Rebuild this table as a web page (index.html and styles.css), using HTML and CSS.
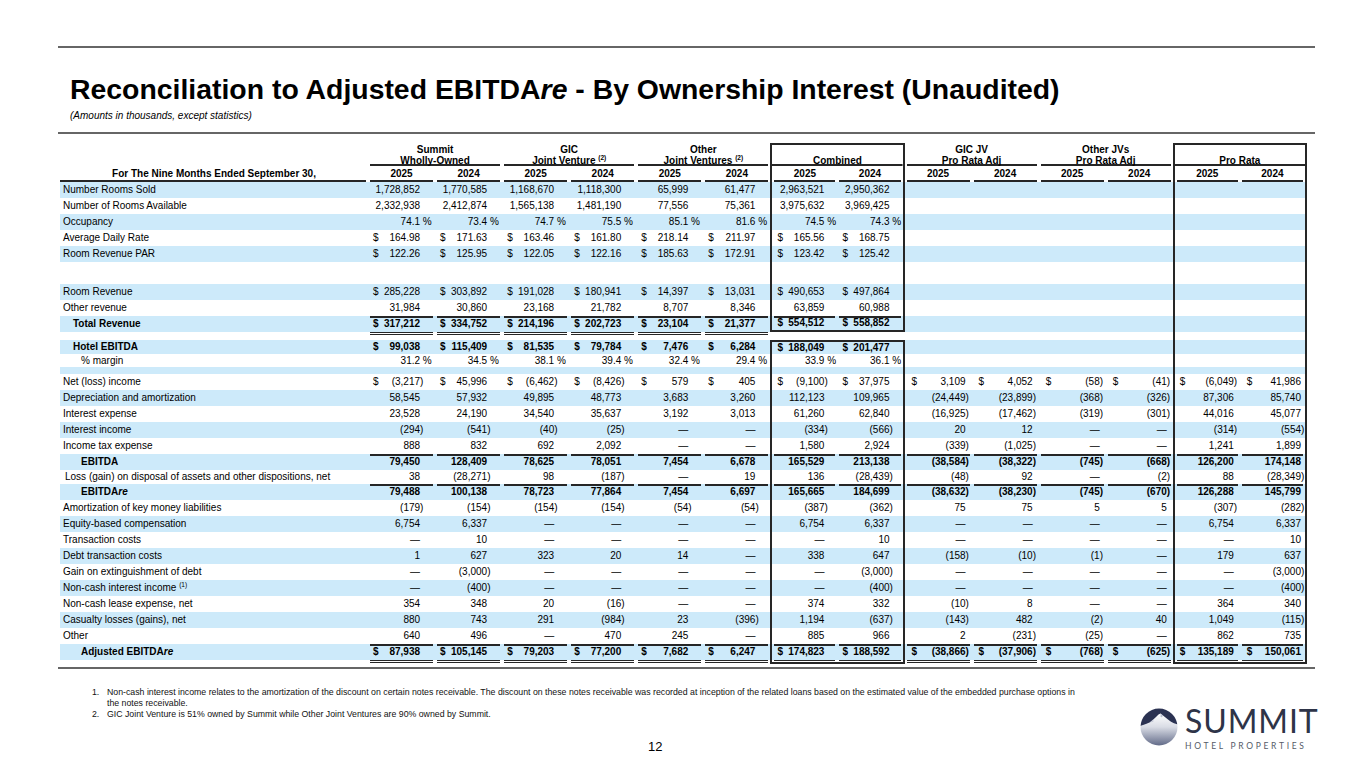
FILE: index.html
```html
<!DOCTYPE html>
<html lang="en">
<head>
<meta charset="utf-8">
<title>Reconciliation to Adjusted EBITDAre - By Ownership Interest</title>
<link rel="stylesheet" href="styles.css">
</head>
<body>
<div class="page">
  <div class="rule rule-top"></div>
  <h1 class="title">Reconciliation to Adjusted EBITDA<em>re</em> - By Ownership Interest (Unaudited)</h1>
  <p class="subtitle">(Amounts in thousands, except statistics)</p>
  <div class="rule"></div>

  <table class="fin">
    <colgroup><col class="c-lab"><col span="14"></colgroup>
    <thead>
      <tr class="grp">
        <th></th>
        <th colspan="2">Summit<br>Wholly-Owned</th>
        <th colspan="2">GIC<br>Joint Venture <sup>(2)</sup></th>
        <th colspan="2">Other<br>Joint Ventures <sup>(2)</sup></th>
        <th colspan="2" class="bx">Combined</th>
        <th colspan="2">GIC JV<br>Pro Rata Adj</th>
        <th colspan="2">Other JVs<br>Pro Rata Adj</th>
        <th colspan="2" class="bx">Pro Rata</th>
      </tr>
      <tr class="yr">
        <th>For The Nine Months Ended September 30,</th>
        <th>2025</th><th>2024</th><th>2025</th><th>2024</th><th>2025</th><th>2024</th><th>2025</th><th>2024</th>
        <th>2025</th><th>2024</th><th>2025</th><th>2024</th><th>2025</th><th>2024</th>
      </tr>
    </thead>
    <tbody>
      <tr class="s"><td>Number Rooms Sold</td><td>1,728,852</td><td>1,770,585</td><td>1,168,670</td><td>1,118,300</td><td>65,999</td><td>61,477</td><td>2,963,521</td><td>2,950,362</td><td></td><td></td><td></td><td></td><td></td><td></td></tr>
      <tr><td>Number of Rooms Available</td><td>2,332,938</td><td>2,412,874</td><td>1,565,138</td><td>1,481,190</td><td>77,556</td><td>75,361</td><td>3,975,632</td><td>3,969,425</td><td></td><td></td><td></td><td></td><td></td><td></td></tr>
      <tr class="s"><td>Occupancy</td><td>74.1<span class="h"> %</span></td><td>73.4<span class="h"> %</span></td><td>74.7<span class="h"> %</span></td><td>75.5<span class="h"> %</span></td><td>85.1<span class="h"> %</span></td><td>81.6<span class="h"> %</span></td><td>74.5<span class="h"> %</span></td><td>74.3<span class="h"> %</span></td><td></td><td></td><td></td><td></td><td></td><td></td></tr>
      <tr><td>Average Daily Rate</td><td><span class="d">$</span>164.98</td><td><span class="d">$</span>171.63</td><td><span class="d">$</span>163.46</td><td><span class="d">$</span>161.80</td><td><span class="d">$</span>218.14</td><td><span class="d">$</span>211.97</td><td><span class="d">$</span>165.56</td><td><span class="d">$</span>168.75</td><td></td><td></td><td></td><td></td><td></td><td></td></tr>
      <tr class="s"><td>Room Revenue PAR</td><td><span class="d">$</span>122.26</td><td><span class="d">$</span>125.95</td><td><span class="d">$</span>122.05</td><td><span class="d">$</span>122.16</td><td><span class="d">$</span>185.63</td><td><span class="d">$</span>172.91</td><td><span class="d">$</span>123.42</td><td><span class="d">$</span>125.42</td><td></td><td></td><td></td><td></td><td></td><td></td></tr>
      <tr class="blank"><td></td><td></td><td></td><td></td><td></td><td></td><td></td><td></td><td></td><td></td><td></td><td></td><td></td><td></td><td></td></tr>
      <tr class="s"><td>Room Revenue</td><td><span class="d">$</span>285,228</td><td><span class="d">$</span>303,892</td><td><span class="d">$</span>191,028</td><td><span class="d">$</span>180,941</td><td><span class="d">$</span>14,397</td><td><span class="d">$</span>13,031</td><td><span class="d">$</span>490,653</td><td><span class="d">$</span>497,864</td><td></td><td></td><td></td><td></td><td></td><td></td></tr>
      <tr><td>Other revenue</td><td>31,984</td><td>30,860</td><td>23,168</td><td>21,782</td><td>8,707</td><td>8,346</td><td>63,859</td><td>60,988</td><td></td><td></td><td></td><td></td><td></td><td></td></tr>
      <tr class="s b ut8 tot"><td class="i1">Total Revenue</td><td><span class="d">$</span>317,212</td><td><span class="d">$</span>334,752</td><td><span class="d">$</span>214,196</td><td><span class="d">$</span>202,723</td><td><span class="d">$</span>23,104</td><td><span class="d">$</span>21,377</td><td><span class="d">$</span>554,512</td><td><span class="d">$</span>558,852</td><td></td><td></td><td></td><td></td><td></td><td></td></tr>
      <tr class="gap db6"><td></td><td></td><td></td><td></td><td></td><td></td><td></td><td></td><td></td><td></td><td></td><td></td><td></td><td></td><td></td></tr>
      <tr class="s b h13 heb"><td class="i1">Hotel EBITDA</td><td><span class="d">$</span>99,038</td><td><span class="d">$</span>115,409</td><td><span class="d">$</span>81,535</td><td><span class="d">$</span>79,784</td><td><span class="d">$</span>7,476</td><td><span class="d">$</span>6,284</td><td><span class="d">$</span>188,049</td><td><span class="d">$</span>201,477</td><td></td><td></td><td></td><td></td><td></td><td></td></tr>
      <tr class="h13"><td class="i2">% margin</td><td>31.2<span class="h"> %</span></td><td>34.5<span class="h"> %</span></td><td>38.1<span class="h"> %</span></td><td>39.4<span class="h"> %</span></td><td>32.4<span class="h"> %</span></td><td>29.4<span class="h"> %</span></td><td>33.9<span class="h"> %</span></td><td>36.1<span class="h"> %</span></td><td></td><td></td><td></td><td></td><td></td><td></td></tr>
      <tr class="s thin"><td></td><td></td><td></td><td></td><td></td><td></td><td></td><td></td><td></td><td></td><td></td><td></td><td></td><td></td><td></td></tr>
      <tr><td>Net (loss) income</td><td><span class="d">$</span>(3,217<span class="h">)</span></td><td><span class="d">$</span>45,996</td><td><span class="d">$</span>(6,462<span class="h">)</span></td><td><span class="d">$</span>(8,426<span class="h">)</span></td><td><span class="d">$</span>579</td><td><span class="d">$</span>405</td><td><span class="d">$</span>(9,100<span class="h">)</span></td><td><span class="d">$</span>37,975</td><td><span class="d">$</span>3,109</td><td><span class="d">$</span>4,052</td><td><span class="d">$</span>(58<span class="h">)</span></td><td><span class="d">$</span>(41<span class="h">)</span></td><td><span class="d">$</span>(6,049<span class="h">)</span></td><td><span class="d">$</span>41,986</td></tr>
      <tr class="s"><td>Depreciation and amortization</td><td>58,545</td><td>57,932</td><td>49,895</td><td>48,773</td><td>3,683</td><td>3,260</td><td>112,123</td><td>109,965</td><td>(24,449<span class="h">)</span></td><td>(23,899<span class="h">)</span></td><td>(368<span class="h">)</span></td><td>(326<span class="h">)</span></td><td>87,306</td><td>85,740</td></tr>
      <tr><td>Interest expense</td><td>23,528</td><td>24,190</td><td>34,540</td><td>35,637</td><td>3,192</td><td>3,013</td><td>61,260</td><td>62,840</td><td>(16,925<span class="h">)</span></td><td>(17,462<span class="h">)</span></td><td>(319<span class="h">)</span></td><td>(301<span class="h">)</span></td><td>44,016</td><td>45,077</td></tr>
      <tr class="s"><td>Interest income</td><td>(294<span class="h">)</span></td><td>(541<span class="h">)</span></td><td>(40<span class="h">)</span></td><td>(25<span class="h">)</span></td><td>—</td><td>—</td><td>(334<span class="h">)</span></td><td>(566<span class="h">)</span></td><td>20</td><td>12</td><td>—</td><td>—</td><td>(314<span class="h">)</span></td><td>(554<span class="h">)</span></td></tr>
      <tr><td>Income tax expense</td><td>888</td><td>832</td><td>692</td><td>2,092</td><td>—</td><td>—</td><td>1,580</td><td>2,924</td><td>(339<span class="h">)</span></td><td>(1,025<span class="h">)</span></td><td>—</td><td>—</td><td>1,241</td><td>1,899</td></tr>
      <tr class="s b ut"><td class="i2">EBITDA</td><td>79,450</td><td>128,409</td><td>78,625</td><td>78,051</td><td>7,454</td><td>6,678</td><td>165,529</td><td>213,138</td><td>(38,584<span class="h">)</span></td><td>(38,322<span class="h">)</span></td><td>(745<span class="h">)</span></td><td>(668<span class="h">)</span></td><td>126,200</td><td>174,148</td></tr>
      <tr class="h14"><td class="i0">Loss (gain) on disposal of assets and other dispositions, net</td><td>38</td><td>(28,271<span class="h">)</span></td><td>98</td><td>(187<span class="h">)</span></td><td>—</td><td>19</td><td>136</td><td>(28,439<span class="h">)</span></td><td>(48<span class="h">)</span></td><td>92</td><td>—</td><td>(2<span class="h">)</span></td><td>88</td><td>(28,349<span class="h">)</span></td></tr>
      <tr class="s b ut"><td class="i2">EBITDA<em>re</em></td><td>79,488</td><td>100,138</td><td>78,723</td><td>77,864</td><td>7,454</td><td>6,697</td><td>165,665</td><td>184,699</td><td>(38,632<span class="h">)</span></td><td>(38,230<span class="h">)</span></td><td>(745<span class="h">)</span></td><td>(670<span class="h">)</span></td><td>126,288</td><td>145,799</td></tr>
      <tr><td>Amortization of key money liabilities</td><td>(179<span class="h">)</span></td><td>(154<span class="h">)</span></td><td>(154<span class="h">)</span></td><td>(154<span class="h">)</span></td><td>(54<span class="h">)</span></td><td>(54<span class="h">)</span></td><td>(387<span class="h">)</span></td><td>(362<span class="h">)</span></td><td>75</td><td>75</td><td>5</td><td>5</td><td>(307<span class="h">)</span></td><td>(282<span class="h">)</span></td></tr>
      <tr class="s"><td>Equity-based compensation</td><td>6,754</td><td>6,337</td><td>—</td><td>—</td><td>—</td><td>—</td><td>6,754</td><td>6,337</td><td>—</td><td>—</td><td>—</td><td>—</td><td>6,754</td><td>6,337</td></tr>
      <tr><td>Transaction costs</td><td>—</td><td>10</td><td>—</td><td>—</td><td>—</td><td>—</td><td>—</td><td>10</td><td>—</td><td>—</td><td>—</td><td>—</td><td>—</td><td>10</td></tr>
      <tr class="s"><td>Debt transaction costs</td><td>1</td><td>627</td><td>323</td><td>20</td><td>14</td><td>—</td><td>338</td><td>647</td><td>(158<span class="h">)</span></td><td>(10<span class="h">)</span></td><td>(1<span class="h">)</span></td><td>—</td><td>179</td><td>637</td></tr>
      <tr><td>Gain on extinguishment of debt</td><td>—</td><td>(3,000<span class="h">)</span></td><td>—</td><td>—</td><td>—</td><td>—</td><td>—</td><td>(3,000<span class="h">)</span></td><td>—</td><td>—</td><td>—</td><td>—</td><td>—</td><td>(3,000<span class="h">)</span></td></tr>
      <tr class="s"><td>Non-cash interest income <sup>(1)</sup></td><td>—</td><td>(400<span class="h">)</span></td><td>—</td><td>—</td><td>—</td><td>—</td><td>—</td><td>(400<span class="h">)</span></td><td>—</td><td>—</td><td>—</td><td>—</td><td>—</td><td>(400<span class="h">)</span></td></tr>
      <tr><td>Non-cash lease expense, net</td><td>354</td><td>348</td><td>20</td><td>(16<span class="h">)</span></td><td>—</td><td>—</td><td>374</td><td>332</td><td>(10<span class="h">)</span></td><td>8</td><td>—</td><td>—</td><td>364</td><td>340</td></tr>
      <tr class="s"><td>Casualty losses (gains), net</td><td>880</td><td>743</td><td>291</td><td>(984<span class="h">)</span></td><td>23</td><td>(396<span class="h">)</span></td><td>1,194</td><td>(637<span class="h">)</span></td><td>(143<span class="h">)</span></td><td>482</td><td>(2<span class="h">)</span></td><td>40</td><td>1,049</td><td>(115<span class="h">)</span></td></tr>
      <tr><td>Other</td><td>640</td><td>496</td><td>—</td><td>470</td><td>245</td><td>—</td><td>885</td><td>966</td><td>2</td><td>(231<span class="h">)</span></td><td>(25<span class="h">)</span></td><td>—</td><td>862</td><td>735</td></tr>
      <tr class="s b ut"><td class="i2">Adjusted EBITDA<em>re</em></td><td><span class="d">$</span>87,938</td><td><span class="d">$</span>105,145</td><td><span class="d">$</span>79,203</td><td><span class="d">$</span>77,200</td><td><span class="d">$</span>7,682</td><td><span class="d">$</span>6,247</td><td><span class="d">$</span>174,823</td><td><span class="d">$</span>188,592</td><td><span class="d">$</span>(38,866<span class="h">)</span></td><td><span class="d">$</span>(37,906<span class="h">)</span></td><td><span class="d">$</span>(768<span class="h">)</span></td><td><span class="d">$</span>(625<span class="h">)</span></td><td><span class="d">$</span>135,189</td><td><span class="d">$</span>150,061</td></tr>
      <tr class="end db"><td></td><td></td><td></td><td></td><td></td><td></td><td></td><td></td><td></td><td></td><td></td><td></td><td></td><td></td><td></td></tr>
    </tbody>
  </table>

  <div class="rule rule-bottom"></div>

  <div class="footer">
    <div class="foot-main">
      <ol class="notes">
        <li><span class="num">1.</span><span>Non-cash interest income relates to the amortization of the discount on certain notes receivable. The discount on these notes receivable was recorded at inception of the related loans based on the estimated value of the embedded purchase options in<br>the notes receivable.</span></li>
        <li><span class="num">2.</span><span>GIC Joint Venture is 51% owned by Summit while Other Joint Ventures are 90% owned by Summit.</span></li>
      </ol>
      <div class="pnum">12</div>
    </div>
    <div class="logo">
      <svg class="logo-mark" width="38" height="38" viewBox="0 0 38 38" aria-hidden="true">
        <defs>
          <linearGradient id="snow" x1="0" y1="0" x2="0" y2="1">
            <stop offset="0.15" stop-color="#ffffff"/>
            <stop offset="0.5" stop-color="#d9dce5"/>
            <stop offset="1" stop-color="#5f6886"/>
          </linearGradient>
          <clipPath id="disc"><circle cx="19" cy="19" r="18.5"/></clipPath>
        </defs>
        <g clip-path="url(#disc)">
          <rect width="38" height="38" fill="url(#snow)"/>
          <path d="M0 0H38V16.5L34 15.2L31 13.8L28 11.6L25.5 9.4L23 7.4L20.5 5.6L18.5 6.4L16 9L13 11.8L10 14.2L6.5 15.8L3 17L0 18Z" fill="#2b3252"/>
          <path d="M20.5 5.6L23 7.4L21.8 9.5L20.6 8.2Z" fill="#b9bfd0"/>
          <path d="M13 11.8L10 14.2L12.5 14L13.6 13.2Z" fill="#c3c8d6"/>
        </g>
      </svg>
      <div class="logo-text">
        <div class="brand">SUMMIT</div>
        <div class="tag">HOTEL PROPERTIES</div>
      </div>
    </div>
  </div>
</div>
</body>
</html>
```

FILE: styles.css
```css
* { box-sizing: border-box; }

html, body {
  margin: 0;
  padding: 0;
  background: #ffffff;
}

body {
  font-family: "Liberation Sans", Arial, Helvetica, sans-serif;
  color: #000;
}

.page {
  width: 1365px;
  height: 768px;
  overflow: hidden;
}

.rule {
  margin-left: 58px;
  width: 1257px;
  height: 2px;
  background: #666666;
}

.rule-top { margin-top: 46px; }
.rule-bottom { margin-top: 3px; }

.title {
  margin: 25px 0 0 70px;
  font-size: 28.4px;
  line-height: 32px;
  font-weight: bold;
  white-space: nowrap;
}

.title em, .fin em { font-style: italic; }

.subtitle {
  margin: 5px 0 10px 70px;
  font-size: 10px;
  line-height: 12px;
  font-style: italic;
}

sup {
  font-size: 6.5px;
  line-height: 0;
  vertical-align: 4px;
  font-weight: normal;
}

.fin sup { font-weight: bold; }
.fin tbody sup { font-weight: normal; }

/* ---------- financial table ---------- */
.fin {
  margin: 9px 0 0 60px;
  width: 1247px;
  table-layout: fixed;
  border-collapse: separate;
  border-spacing: 0;
  font-size: 10px;
}

.fin .c-lab { width: 308px; }

.fin th,
.fin td {
  height: 16px;
  padding: 0 15px 0 5px;
  line-height: 12px;
  white-space: nowrap;
  text-align: right;
  vertical-align: middle;
  font-weight: normal;
}

.fin td:first-child {
  text-align: left;
  padding: 0 2px 0 3px;
}

.fin td:nth-child(8),
.fin td:nth-child(9) { padding-right: 13px; }

.fin td:nth-child(n+10) {
  padding-left: 7px;
  padding-right: 6px;
}

.fin td:nth-child(14) { padding-left: 5px; }
.fin td:nth-child(15) { padding-right: 4px; }

.fin td.i0 { padding-left: 5px; }
.fin td.i1 { padding-left: 13px; }
.fin td.i2 { padding-left: 21px; }

.fin .d { float: left; }

.fin .h {
  display: inline-block;
  width: 0;
  white-space: pre;
}

.fin tr.b td { font-weight: bold; }

.fin tr.s td { background-color: #cdeafa; }

.fin tr.blank td { height: 22px; }
.fin tr.gap td { height: 8px; }
.fin tr.h13 td { height: 13px; }
.fin tr.h14 td { height: 14px; }
.fin tr.thin td { height: 7px; }
.fin tr.end td { height: 4px; }

/* header */
.fin thead th {
  padding: 0 2px;
  text-align: center;
  font-weight: bold;
}

.fin .grp th {
  height: 23px;
  line-height: 11px;
  vertical-align: bottom;
  background: linear-gradient(#262626, #262626) center bottom / calc(100% - 4px) 2px no-repeat;
}

.fin .grp th:first-child { background: none; }

.fin .grp th.bx {
  border: 2px solid #262626;
  border-bottom: 0;
  background-size: 100% 2px;
}

.fin .yr th {
  height: 16px;
  background: linear-gradient(#262626, #262626) center bottom / calc(100% - 4px) 2px no-repeat;
}

.fin .yr th:first-child {
  background-position: left bottom;
  background-size: calc(100% - 2px) 2px;
}

/* underlines */
.fin tr.ut8 td:nth-child(n+2):nth-child(-n+9),
.fin tr.ut td:nth-child(n+2) {
  background-image: linear-gradient(#262626, #262626);
  background-size: calc(100% - 4px) 2px;
  background-position: center top;
  background-repeat: no-repeat;
}

.fin tr.db6 td:nth-child(n+2):nth-child(-n+7),
.fin tr.db td:nth-child(n+2) {
  background-image: linear-gradient(#262626, #262626), linear-gradient(#262626, #262626);
  background-size: calc(100% - 4px) 1px;
  background-position: center 0, center 2px;
  background-repeat: no-repeat;
}

/* boxes: Combined and Pro Rata */
.fin .yr th:nth-child(8),
.fin .yr th:nth-child(14),
.fin tbody tr:not(.gap) td:nth-child(8),
.fin tbody td:nth-child(14) { border-left: 2px solid #262626; }

.fin .yr th:nth-child(9),
.fin .yr th:nth-child(15),
.fin tbody tr:not(.gap) td:nth-child(9),
.fin tbody td:nth-child(15) { border-right: 2px solid #262626; }

.fin tr.tot td:nth-child(8),
.fin tr.tot td:nth-child(9),
.fin tr.end td:nth-child(8),
.fin tr.end td:nth-child(9),
.fin tr.end td:nth-child(14),
.fin tr.end td:nth-child(15) { border-bottom: 2px solid #262626; }

.fin tr.heb td:nth-child(8),
.fin tr.heb td:nth-child(9) { border-top: 2px solid #262626; }

/* ---------- footer ---------- */
.footer {
  display: flex;
  margin-top: 18px;
  padding-left: 92px;
}

.foot-main { width: 1048px; }

.notes {
  margin: 0;
  padding: 0;
  list-style: none;
  font-size: 8.75px;
  line-height: 11px;
  color: #111;
}

.notes li {
  display: grid;
  grid-template-columns: 15px 1fr;
}

.pnum {
  margin-top: 19px;
  padding-left: 556px;
  font-size: 13px;
  line-height: 15px;
}

.logo {
  margin-top: 21px;
  display: flex;
  align-items: flex-start;
  gap: 7px;
}

.logo-mark { display: block; flex: none; }

.logo-text {
  display: flex;
  flex-direction: column;
  align-items: flex-start;
}

.brand {
  font-family: Lato, "Open Sans", sans-serif;
  font-weight: 400;
  font-size: 32px;
  line-height: 26px;
  letter-spacing: 0.9px;
  color: #2e3448;
}

.tag {
  font-family: Lato, "Open Sans", sans-serif;
  font-size: 8.5px;
  line-height: 10px;
  letter-spacing: 2.7px;
  color: #555b68;
  margin-top: 7px;
}
```
